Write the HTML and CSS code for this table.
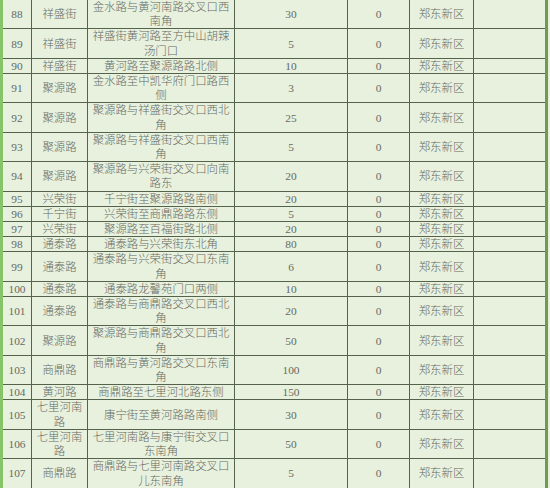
FILE: index.html
```html
<!DOCTYPE html>
<html lang="zh-CN">
<head>
<meta charset="utf-8">
<title>停车泊位表</title>
<link rel="stylesheet" href="styles.css">
</head>
<body>
<div class="sheet">
  <div class="row"><div class="c">88</div><div class="c">祥盛街</div><div class="c">金水路与黄河南路交叉口西南角</div><div class="c">30</div><div class="c">0</div><div class="c">郑东新区</div><div class="c"></div></div>
  <div class="row"><div class="c">89</div><div class="c">祥盛街</div><div class="c">祥盛街黄河路至方中山胡辣汤门口</div><div class="c">5</div><div class="c">0</div><div class="c">郑东新区</div><div class="c"></div></div>
  <div class="row"><div class="c">90</div><div class="c">祥盛街</div><div class="c">黄河路至聚源路路北侧</div><div class="c">10</div><div class="c">0</div><div class="c">郑东新区</div><div class="c"></div></div>
  <div class="row"><div class="c">91</div><div class="c">聚源路</div><div class="c">金水路至中凯华府门口路西侧</div><div class="c">3</div><div class="c">0</div><div class="c">郑东新区</div><div class="c"></div></div>
  <div class="row"><div class="c">92</div><div class="c">聚源路</div><div class="c">聚源路与祥盛街交叉口西北角</div><div class="c">25</div><div class="c">0</div><div class="c">郑东新区</div><div class="c"></div></div>
  <div class="row"><div class="c">93</div><div class="c">聚源路</div><div class="c">聚源路与祥盛街交叉口西南角</div><div class="c">5</div><div class="c">0</div><div class="c">郑东新区</div><div class="c"></div></div>
  <div class="row"><div class="c">94</div><div class="c">聚源路</div><div class="c">聚源路与兴荣街交叉口向南路东</div><div class="c">20</div><div class="c">0</div><div class="c">郑东新区</div><div class="c"></div></div>
  <div class="row"><div class="c">95</div><div class="c">兴荣街</div><div class="c">千宁街至聚源路路南侧</div><div class="c">20</div><div class="c">0</div><div class="c">郑东新区</div><div class="c"></div></div>
  <div class="row"><div class="c">96</div><div class="c">千宁街</div><div class="c">兴荣街至商鼎路路东侧</div><div class="c">5</div><div class="c">0</div><div class="c">郑东新区</div><div class="c"></div></div>
  <div class="row"><div class="c">97</div><div class="c">兴荣街</div><div class="c">聚源路至百福街路北侧</div><div class="c">20</div><div class="c">0</div><div class="c">郑东新区</div><div class="c"></div></div>
  <div class="row"><div class="c">98</div><div class="c">通泰路</div><div class="c">通泰路与兴荣街东北角</div><div class="c">80</div><div class="c">0</div><div class="c">郑东新区</div><div class="c"></div></div>
  <div class="row"><div class="c">99</div><div class="c">通泰路</div><div class="c">通泰路与兴荣街交叉口东南角</div><div class="c">6</div><div class="c">0</div><div class="c">郑东新区</div><div class="c"></div></div>
  <div class="row"><div class="c">100</div><div class="c">通泰路</div><div class="c">通泰路龙馨苑门口两侧</div><div class="c">10</div><div class="c">0</div><div class="c">郑东新区</div><div class="c"></div></div>
  <div class="row"><div class="c">101</div><div class="c">通泰路</div><div class="c">通泰路与商鼎路交叉口西北角</div><div class="c">20</div><div class="c">0</div><div class="c">郑东新区</div><div class="c"></div></div>
  <div class="row"><div class="c">102</div><div class="c">聚源路</div><div class="c">聚源路与商鼎路交叉口西北角</div><div class="c">50</div><div class="c">0</div><div class="c">郑东新区</div><div class="c"></div></div>
  <div class="row"><div class="c">103</div><div class="c">商鼎路</div><div class="c">商鼎路与黄河路交叉口东南角</div><div class="c">100</div><div class="c">0</div><div class="c">郑东新区</div><div class="c"></div></div>
  <div class="row"><div class="c">104</div><div class="c">黄河路</div><div class="c">商鼎路至七里河北路东侧</div><div class="c">150</div><div class="c">0</div><div class="c">郑东新区</div><div class="c"></div></div>
  <div class="row"><div class="c">105</div><div class="c">七里河南路</div><div class="c">康宁街至黄河路路南侧</div><div class="c">30</div><div class="c">0</div><div class="c">郑东新区</div><div class="c"></div></div>
  <div class="row"><div class="c">106</div><div class="c">七里河南路</div><div class="c">七里河南路与康宁街交叉口东南角</div><div class="c">50</div><div class="c">0</div><div class="c">郑东新区</div><div class="c"></div></div>
  <div class="row"><div class="c">107</div><div class="c">商鼎路</div><div class="c">商鼎路与七里河南路交叉口儿东南角</div><div class="c">5</div><div class="c">0</div><div class="c">郑东新区</div><div class="c"></div></div>
</div>
</body>
</html>
```
FILE: styles.css
```css
html, body {
  margin: 0;
  padding: 0;
  background: #e8f1de;
}
body {
  font-family: "Liberation Serif", "Noto Sans CJK SC", serif;
  font-size: 11.4px;
  font-weight: 300;
  line-height: 14.2px;
  color: #666a62;
}
.sheet {
  width: 548px;
  box-sizing: border-box;
  border-left: 3px solid #86c46a;
  border-right: 3px solid #6f9a55;
  background: #e8f1de;
}
.row {
  display: grid;
  grid-template-columns: 29px 56px 147px 113px 62px 64px 71px;
  border-bottom: 1px solid #56634c;
}
.c {
  display: flex;
  align-items: center;
  justify-content: center;
  text-align: center;
  padding: 0 3px;
  border-right: 1px solid #56634c;
  min-width: 0;
}
.c:last-child {
  border-right: none;
}
```
